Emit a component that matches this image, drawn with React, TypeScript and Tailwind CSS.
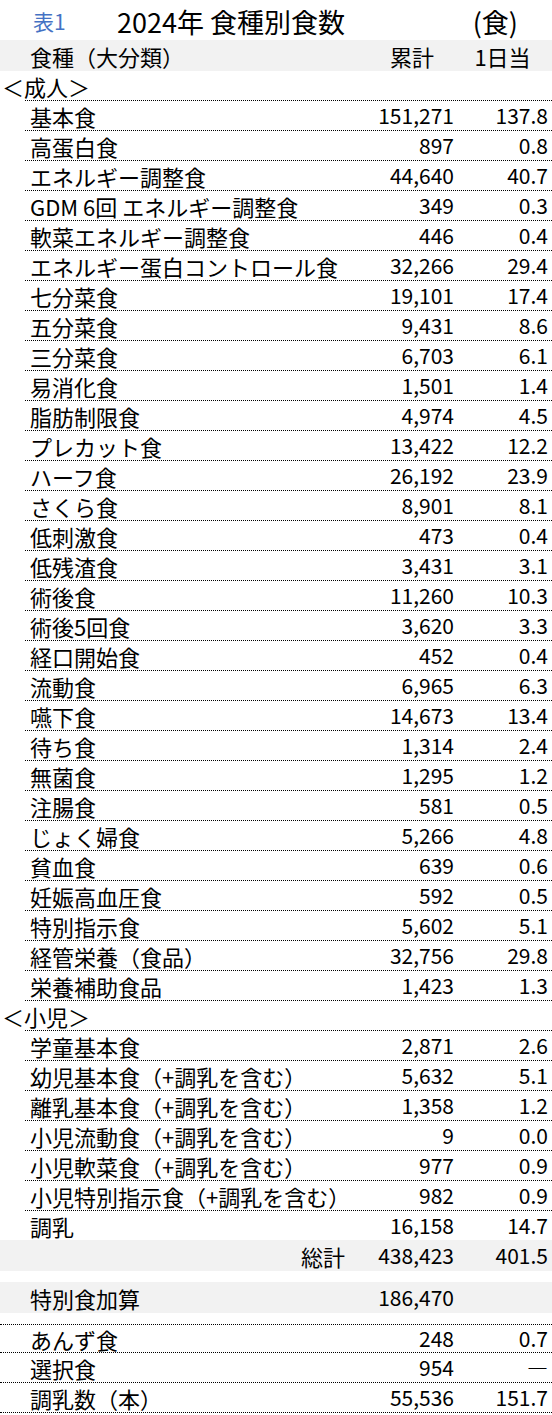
import React from 'react';

type Item = [string, string, string];

const ADULT: Item[] = [
  ['基本食', '151,271', '137.8'],
  ['高蛋白食', '897', '0.8'],
  ['エネルギー調整食', '44,640', '40.7'],
  ['GDM 6回 エネルギー調整食', '349', '0.3'],
  ['軟菜エネルギー調整食', '446', '0.4'],
  ['エネルギー蛋白コントロール食', '32,266', '29.4'],
  ['七分菜食', '19,101', '17.4'],
  ['五分菜食', '9,431', '8.6'],
  ['三分菜食', '6,703', '6.1'],
  ['易消化食', '1,501', '1.4'],
  ['脂肪制限食', '4,974', '4.5'],
  ['プレカット食', '13,422', '12.2'],
  ['ハーフ食', '26,192', '23.9'],
  ['さくら食', '8,901', '8.1'],
  ['低刺激食', '473', '0.4'],
  ['低残渣食', '3,431', '3.1'],
  ['術後食', '11,260', '10.3'],
  ['術後5回食', '3,620', '3.3'],
  ['経口開始食', '452', '0.4'],
  ['流動食', '6,965', '6.3'],
  ['嚥下食', '14,673', '13.4'],
  ['待ち食', '1,314', '2.4'],
  ['無菌食', '1,295', '1.2'],
  ['注腸食', '581', '0.5'],
  ['じょく婦食', '5,266', '4.8'],
  ['貧血食', '639', '0.6'],
  ['妊娠高血圧食', '592', '0.5'],
  ['特別指示食', '5,602', '5.1'],
  ['経管栄養（食品）', '32,756', '29.8'],
  ['栄養補助食品', '1,423', '1.3'],
];

const CHILD: Item[] = [
  ['学童基本食', '2,871', '2.6'],
  ['幼児基本食（+調乳を含む）', '5,632', '5.1'],
  ['離乳基本食（+調乳を含む）', '1,358', '1.2'],
  ['小児流動食（+調乳を含む）', '9', '0.0'],
  ['小児軟菜食（+調乳を含む）', '977', '0.9'],
  ['小児特別指示食（+調乳を含む）', '982', '0.9'],
];

const EXTRA: Item[] = [
  ['あんず食', '248', '0.7'],
  ['選択食', '954', '―'],
  ['調乳数（本）', '55,536', '151.7'],
];

function Cells({ a, b }: { a: string; b: string }) {
  return (
    <>
      <div className="w-[90px] text-right text-[21px] pr-[3px]">{a}</div>
      <div className="w-[95px] text-right text-[21px] pr-[4px]">{b}</div>
    </>
  );
}

function Row({ item, last }: { item: Item; last?: boolean }) {
  return (
    <div
      className={
        'ml-[25px] flex items-center ' +
        (last ? 'h-[29px]' : 'h-[30px] border-b border-dotted border-black')
      }
    >
      <div className="flex-1 pl-[5px] whitespace-nowrap">{item[0]}</div>
      <Cells a={item[1]} b={item[2]} />
    </div>
  );
}

function Section({ label }: { label: string }) {
  return (
    <div className="ml-[25px] h-[30px] flex items-center border-b border-dotted border-black">
      <div className="-ml-[23px]">{label}</div>
    </div>
  );
}

export default function App() {
  return (
    <div
      className="w-[552px] bg-white text-black text-[22px] leading-none"
      style={{ fontFamily: '"Noto Sans CJK JP", "Noto Sans", sans-serif' }}
    >
      {/* Title */}
      <div className="h-[40px] flex items-center pt-[3px]">
        <div className="w-[117px] pl-[33px] text-[21px] text-[#4472c4]">表1</div>
        <div className="text-[27px]">2024年 食種別食数</div>
        <div className="ml-auto mr-[34px] text-[27px]">(食)</div>
      </div>

      {/* Column header */}
      <div className="h-[31px] bg-[#f2f2f2] flex items-center">
        <div className="flex-1 pl-[30px]">食種（大分類）</div>
        <div className="w-[90px] text-center">累計</div>
        <div className="w-[95px] text-center pr-[4px]">1日当</div>
      </div>

      <Section label="＜成人＞" />
      {ADULT.map((it) => (
        <Row key={it[0]} item={it} />
      ))}

      <Section label="＜小児＞" />
      {CHILD.map((it) => (
        <Row key={it[0]} item={it} />
      ))}
      <Row item={['調乳', '16,158', '14.7']} last />

      {/* Total */}
      <div className="h-[31px] bg-[#f2f2f2] flex items-center">
        <div className="flex-1 text-right pr-[22px]">総計</div>
        <Cells a="438,423" b="401.5" />
      </div>

      <div className="h-[11px]" />

      <div className="h-[31px] bg-[#f2f2f2] flex items-center">
        <div className="flex-1 pl-[30px]">特別食加算</div>
        <Cells a="186,470" b="" />
      </div>

      <div className="h-[12px] border-b border-dotted border-black" />

      {EXTRA.map((it, i) => (
        <div
          key={it[0]}
          className={
            'flex items-center border-b border-dotted border-black ' +
            (i === 0 ? 'h-[28px]' : 'h-[30px]')
          }
        >
          <div className="flex-1 pl-[30px] whitespace-nowrap">{it[0]}</div>
          <Cells a={it[1]} b={it[2]} />
        </div>
      ))}
    </div>
  );
}
